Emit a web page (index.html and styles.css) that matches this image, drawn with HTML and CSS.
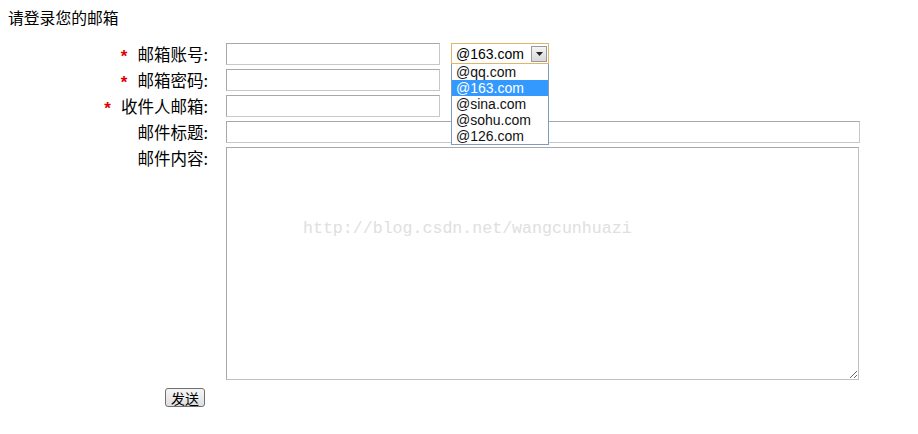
FILE: index.html
```html
<!DOCTYPE html>
<html lang="zh-CN">
<head>
  <meta charset="UTF-8" />
  <title>发送邮件</title>
  <link rel="stylesheet" href="styles.css">
</head>
<body>

  <p class="titulo">请登录您的邮箱</p>

  <form class="formulario">
    <label class="etiqueta"><span class="req">*</span>邮箱账号:</label>
    <div class="campo">
      <input type="text" class="corto" />
      <div class="selector">
        <div class="selector-caja">
          <span>@163.com</span>
          <span class="flecha"><svg width="7" height="4" viewBox="0 0 7 4"><path d="M0 0h7L3.5 4z" fill="#222"/></svg></span>
        </div>
        <ul class="lista">
          <li>@qq.com</li>
          <li class="activo">@163.com</li>
          <li>@sina.com</li>
          <li>@sohu.com</li>
          <li>@126.com</li>
        </ul>
      </div>
    </div>

    <label class="etiqueta"><span class="req">*</span>邮箱密码:</label>
    <div class="campo"><input type="password" class="corto" /></div>

    <label class="etiqueta"><span class="req">*</span>收件人邮箱:</label>
    <div class="campo"><input type="text" class="corto" /></div>

    <label class="etiqueta">邮件标题:</label>
    <div class="campo"><input type="text" class="largo" /></div>

    <div class="etiqueta-arriba">
      <label class="etiqueta">邮件内容:</label>
    </div>
    <div class="campo area">
      <textarea></textarea>
      <span class="marca">http://blog.csdn.net/wangcunhuazi</span>
    </div>

    <div class="acciones">
      <button type="button" class="btn-enviar">发送</button>
    </div>
  </form>

</body>
</html>
```

FILE: styles.css
```css
body {
  margin: 8px;
  font-family: "Noto Sans CJK SC", "Liberation Sans", sans-serif;
  font-size: 16.5px;
  color: #000;
  background-color: #ffffff;
}

.titulo {
  margin: 0;
  line-height: 20px;
  height: 20px;
  font-size: 15.8px;
}

.formulario {
  margin-top: 15px;
  display: grid;
  grid-template-columns: 200px 1fr;
  grid-template-rows: 22px 22px 22px 22px 233px auto;
  column-gap: 18px;
  row-gap: 4px;
}

.etiqueta {
  display: flex;
  align-items: center;
  justify-content: flex-end;
  height: 22px;
  line-height: 20px;
  white-space: nowrap;
}

.req {
  color: #e00000;
  font-family: "Liberation Sans", sans-serif;
  font-weight: bold;
  font-size: 17px;
  line-height: 10px;
  padding-top: 6px;
  margin-right: 10px;
}

.campo {
  display: flex;
  align-items: flex-start;
  gap: 12px;
  position: relative;
}

input {
  box-sizing: border-box;
  height: 22px;
  border: 1px solid #a8a8a8;
  border-right-color: #c8c8c8;
  border-bottom-color: #c8c8c8;
  padding: 1px 3px;
  margin: 0;
  font-size: 13px;
  background: #fff;
}

.corto {
  width: 214px;
}

.largo {
  width: 634px;
}

.selector {
  position: relative;
  width: 98px;
  font-family: "Liberation Sans", sans-serif;
  font-size: 14px;
  margin-left: -1px;
}

.selector-caja {
  box-sizing: border-box;
  height: 21px;
  border: 1px solid #e0b56a;
  display: flex;
  align-items: center;
  justify-content: space-between;
  padding: 0 1px 0 4px;
  background: #fff;
}

.flecha {
  width: 16px;
  height: 16px;
  box-sizing: border-box;
  border: 1px solid #9a9a9a;
  background: linear-gradient(#f4f4f4, #d8d8d8);
  display: flex;
  align-items: center;
  justify-content: center;
}

.lista {
  position: absolute;
  top: 21px;
  left: 0;
  width: 98px;
  box-sizing: border-box;
  margin: 0;
  padding: 0;
  list-style: none;
  border: 1px solid #7f9db9;
  border-top: none;
  background: #fff;
  z-index: 10;
}

.lista li {
  height: 16px;
  line-height: 16px;
  padding-left: 4px;
  font-size: 14px;
  color: #111;
}

.lista li.activo {
  background-color: #3399ff;
  color: #fff;
}

textarea {
  box-sizing: border-box;
  width: 633px;
  height: 233px;
  margin: 0;
  border: 1px solid #a8a8a8;
  border-right-color: #c0c0c0;
  border-bottom-color: #c0c0c0;
  resize: both;
  font-size: 13px;
}

.marca {
  position: absolute;
  left: 77px;
  top: 72px;
  font-family: "Liberation Mono", monospace;
  font-size: 16.6px;
  color: #e0e0e0;
  pointer-events: none;
}

.acciones {
  grid-column: 1;
  display: flex;
  justify-content: flex-end;
  align-items: flex-start;
  padding-top: 4px;
  padding-right: 3px;
}

.btn-enviar {
  height: 19px;
  width: 40px;
  padding: 0;
  font-family: "Noto Sans CJK SC", sans-serif;
  font-size: 14px;
  line-height: 16px;
  color: #000;
  border: 1px solid #707070;
  border-radius: 3px;
  background: linear-gradient(#f6f6f6, #dedede);
  cursor: pointer;
}
```
